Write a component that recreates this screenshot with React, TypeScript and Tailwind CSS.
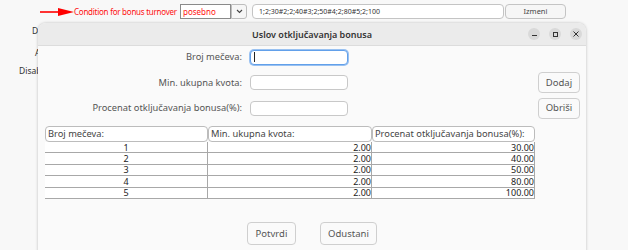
import React from "react";

const rows = [
  ["1", "2.00", "30.00"],
  ["2", "2.00", "40.00"],
  ["3", "2.00", "50.00"],
  ["4", "2.00", "80.00"],
  ["5", "2.00", "100.00"],
];

function FormRow({ label, focused, button }: { label: string; focused?: boolean; button?: string }) {
  return (
    <div className="flex h-[21px] items-center">
      <div className="w-[204px] shrink-0 whitespace-nowrap text-right text-[9.3px] leading-none text-[#555]">{label}</div>
      <div
        className={
          "ml-[8px] flex h-[15px] w-[98px] shrink-0 items-center rounded-[4px] bg-white " +
          (focused ? "border border-[#62a0ea] shadow-[0_0_0_1px_#99c1f1]" : "border border-[#c8c8c8]")
        }
      >
        {focused && <div className="ml-[3px] h-[10px] w-[1px] bg-[#222]" />}
      </div>
      <div className="flex-1" />
      {button ? (
        <div className="mr-[6px] flex h-[21px] w-[42px] items-center justify-center rounded-[4px] border border-[#cfcfcf] bg-[#fafafa] text-[9.5px] leading-none text-[#555]">
          {button}
        </div>
      ) : (
        <div className="mr-[6px] w-[42px]" />
      )}
    </div>
  );
}

export default function App() {
  return (
    <div className="relative h-[250px] w-[628px] overflow-hidden bg-[#f8f8f8] font-['Noto_Sans',sans-serif]">
      {/* background page top row */}
      <div className="flex h-[23px] items-start pt-[4px]">
        <div className="ml-[40px] flex h-[15px] w-[34px] shrink-0 items-center">
          <svg width="34" height="10" viewBox="0 0 34 10">
            <line x1="0" y1="5" x2="20" y2="5" stroke="#ff0000" strokeWidth="1.6" />
            <polygon points="18,1 34,5 18,9" fill="#ff0000" />
          </svg>
        </div>
        <div className="flex h-[15px] w-[106px] shrink-0 items-center whitespace-nowrap text-[8px] leading-none tracking-[-0.25px] text-[#ff1010]">
          Condition for bonus turnover
        </div>
        <div className="flex h-[15px] w-[51px] shrink-0 items-center border border-[#8a8a8a] bg-white pl-[2px] text-[8px] leading-none text-[#ff1010]">
          posebno
        </div>
        <div className="flex h-[15px] w-[16px] shrink-0 items-center justify-center rounded-r-[3px] border border-[#bdbdbd] bg-[#f6f6f6]">
          <svg width="7" height="5" viewBox="0 0 7 5">
            <polyline points="1,1 3.5,3.5 6,1" fill="none" stroke="#444" strokeWidth="1.1" />
          </svg>
        </div>
        <div className="ml-[5px] flex h-[15px] w-[252px] shrink-0 items-center whitespace-nowrap rounded-[4px] border border-[#c4c4c4] bg-white pl-[6px] text-[7px] leading-none text-[#333]">
          1;2;30#2;2;40#3;2;50#4;2;80#5;2;100
        </div>
        <div className="ml-[1px] flex h-[15px] w-[61px] shrink-0 items-center justify-center rounded-[4px] border border-[#c4c4c4] bg-[#f6f6f6] text-[7.5px] leading-none text-[#444]">
          Izmeni
        </div>
      </div>

      {/* background page left labels (mostly hidden) */}
      <div className="flex flex-col text-[8.5px] leading-none text-[#333]">
        <div className="ml-[32px] mt-[4px]">Date</div>
        <div className="ml-[35px] mt-[13px]">Active</div>
        <div className="ml-[19px] mt-[10px]">Disabled</div>
      </div>

      {/* dialog window */}
      <div className="absolute left-[38px] top-[23px] flex h-[240px] w-[548px] flex-col rounded-t-[8px] bg-[#fafafa] shadow-[0_0_3px_rgba(0,0,0,0.25)]">
        <div className="relative flex h-[23px] shrink-0 items-center justify-center rounded-t-[8px] border-b border-[#dcdcdc] bg-[#ebebeb]">
          <span className="whitespace-nowrap text-[9px] font-semibold leading-none text-[#333]">Uslov otključavanja bonusa</span>
          <div className="absolute right-[4px] top-[5px] flex gap-[9px]">
            <div className="flex h-[12px] w-[12px] items-center justify-center rounded-full bg-[#d9d9d9]">
              <div className="mt-[3px] h-[1px] w-[5px] bg-[#333]" />
            </div>
            <div className="flex h-[12px] w-[12px] items-center justify-center rounded-full bg-[#d9d9d9]">
              <div className="h-[5px] w-[5px] border border-[#333]" />
            </div>
            <div className="flex h-[12px] w-[12px] items-center justify-center rounded-full bg-[#d9d9d9]">
              <svg width="6" height="6" viewBox="0 0 6 6">
                <line x1="0.5" y1="0.5" x2="5.5" y2="5.5" stroke="#333" strokeWidth="1" />
                <line x1="5.5" y1="0.5" x2="0.5" y2="5.5" stroke="#333" strokeWidth="1" />
              </svg>
            </div>
          </div>
        </div>

        <div className="flex flex-col gap-[4.5px] pt-[0.5px]">
          <FormRow label="Broj mečeva:" focused />
          <FormRow label="Min. ukupna kvota:" button="Dodaj" />
          <FormRow label="Procenat otključavanja bonusa(%):" button="Obriši" />
        </div>

        {/* table */}
        <div className="ml-[7px] mt-[7.5px] w-[490px]">
          <div className="grid h-[16px] grid-cols-[163px_164px_163px]">
            {["Broj mečeva:", "Min. ukupna kvota:", "Procenat otključavanja bonusa(%):"].map((h) => (
              <div
                key={h}
                className="flex items-center overflow-hidden whitespace-nowrap rounded-[4px] border border-[#bcbcbc] bg-white pl-[2px] text-[9.3px] leading-none text-[#444]"
              >
                {h}
              </div>
            ))}
          </div>
          {rows.map((r) => (
            <div key={r[0]} className="grid h-[11.4px] grid-cols-[163px_164px_163px] border-b-[1.5px] border-[#a8a8a8] bg-white text-[9px] leading-none text-[#222]">
              <div className="flex items-center justify-center border-r border-[#a8a8a8]">{r[0]}</div>
              <div className="flex items-center justify-end border-r border-[#a8a8a8]">{r[1]}</div>
              <div className="flex items-center justify-end border-r border-[#a8a8a8]">{r[2]}</div>
            </div>
          ))}
        </div>

        <div className="mt-[23px] flex justify-center gap-[24px]">
          <div className="flex h-[23px] w-[49px] items-center justify-center rounded-[4px] border border-[#cfcfcf] bg-[#fafafa] text-[9.5px] leading-none text-[#555]">
            Potvrdi
          </div>
          <div className="flex h-[23px] w-[57px] items-center justify-center rounded-[4px] border border-[#cfcfcf] bg-[#fafafa] text-[9.5px] leading-none text-[#555]">
            Odustani
          </div>
        </div>
      </div>
    </div>
  );
}
